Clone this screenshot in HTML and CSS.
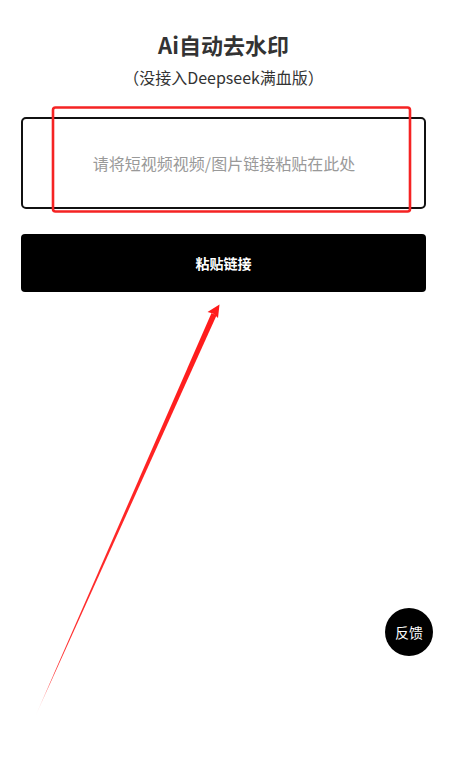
FILE: index.html
```html
<!DOCTYPE html>
<html lang="zh">
<head>
<meta charset="utf-8">
<link rel="stylesheet" href="styles.css">
</head>
<body>
<div class="page">
  <h1 class="title">Ai自动去水印</h1>
  <p class="subtitle">（没接入Deepseek满血版）</p>
  <div class="input-box">
    <span class="placeholder">请将短视频视频/图片链接粘贴在此处</span>
  </div>
  <button class="paste-btn">粘贴链接</button>
</div>
<div class="feedback">反馈</div>
<svg class="annot" width="455" height="761" viewBox="0 0 455 761">
  <defs>
    <linearGradient id="fade" x1="35" y1="717" x2="219" y2="305" gradientUnits="userSpaceOnUse">
      <stop offset="0" stop-color="#ff1a1a" stop-opacity="0"/>
      <stop offset="0.08" stop-color="#ff1a1a" stop-opacity="0.9"/>
      <stop offset="1" stop-color="#ff1a1a"/>
    </linearGradient>
  </defs>
  <rect x="53" y="107.5" width="357" height="104" rx="2.5" fill="none" stroke="#f52323" stroke-width="2.6"/>
  <polygon points="35,717 211.5,313 216.5,315.5" fill="url(#fade)"/>
  <polygon points="219.5,304.5 207.5,312 213,313.5 216.5,316.5 218,318" fill="#ff1a1a"/>
</svg>
</body>
</html>
```
FILE: styles.css
```css
html, body {
  margin: 0;
  padding: 0;
  background: #fff;
}
body {
  font-family: "Noto Sans CJK SC", "Noto Sans", sans-serif;
  width: 455px;
  height: 761px;
  position: relative;
  overflow: hidden;
}
.page {
  padding: 28px 29px 0 21px;
  display: flex;
  flex-direction: column;
}
.title {
  margin: 0;
  text-align: center;
  font-size: 22px;
  line-height: 32px;
  font-weight: 700;
  color: #333;
}
.subtitle {
  margin: 3px 0 0;
  text-align: center;
  font-size: 16px;
  line-height: 28px;
  color: #333;
}
.input-box {
  margin-top: 26px;
  height: 88px;
  border: 2px solid #111;
  border-radius: 5px;
  display: flex;
  align-items: center;
  justify-content: center;
}
.placeholder {
  font-size: 16px;
  color: #999;
  padding-left: 1px;
}
.paste-btn {
  margin-top: 25px;
  height: 58px;
  border: none;
  border-radius: 4px;
  background: #000;
  color: #fff;
  font-family: inherit;
  font-size: 14px;
  font-weight: 700;
  padding: 0;
}
.feedback {
  position: absolute;
  left: 385px;
  top: 608px;
  width: 48px;
  height: 48px;
  border-radius: 50%;
  background: #000;
  color: #fff;
  font-size: 14px;
  display: flex;
  align-items: center;
  justify-content: center;
}
.annot {
  position: absolute;
  left: 0;
  top: 0;
  pointer-events: none;
}
```
